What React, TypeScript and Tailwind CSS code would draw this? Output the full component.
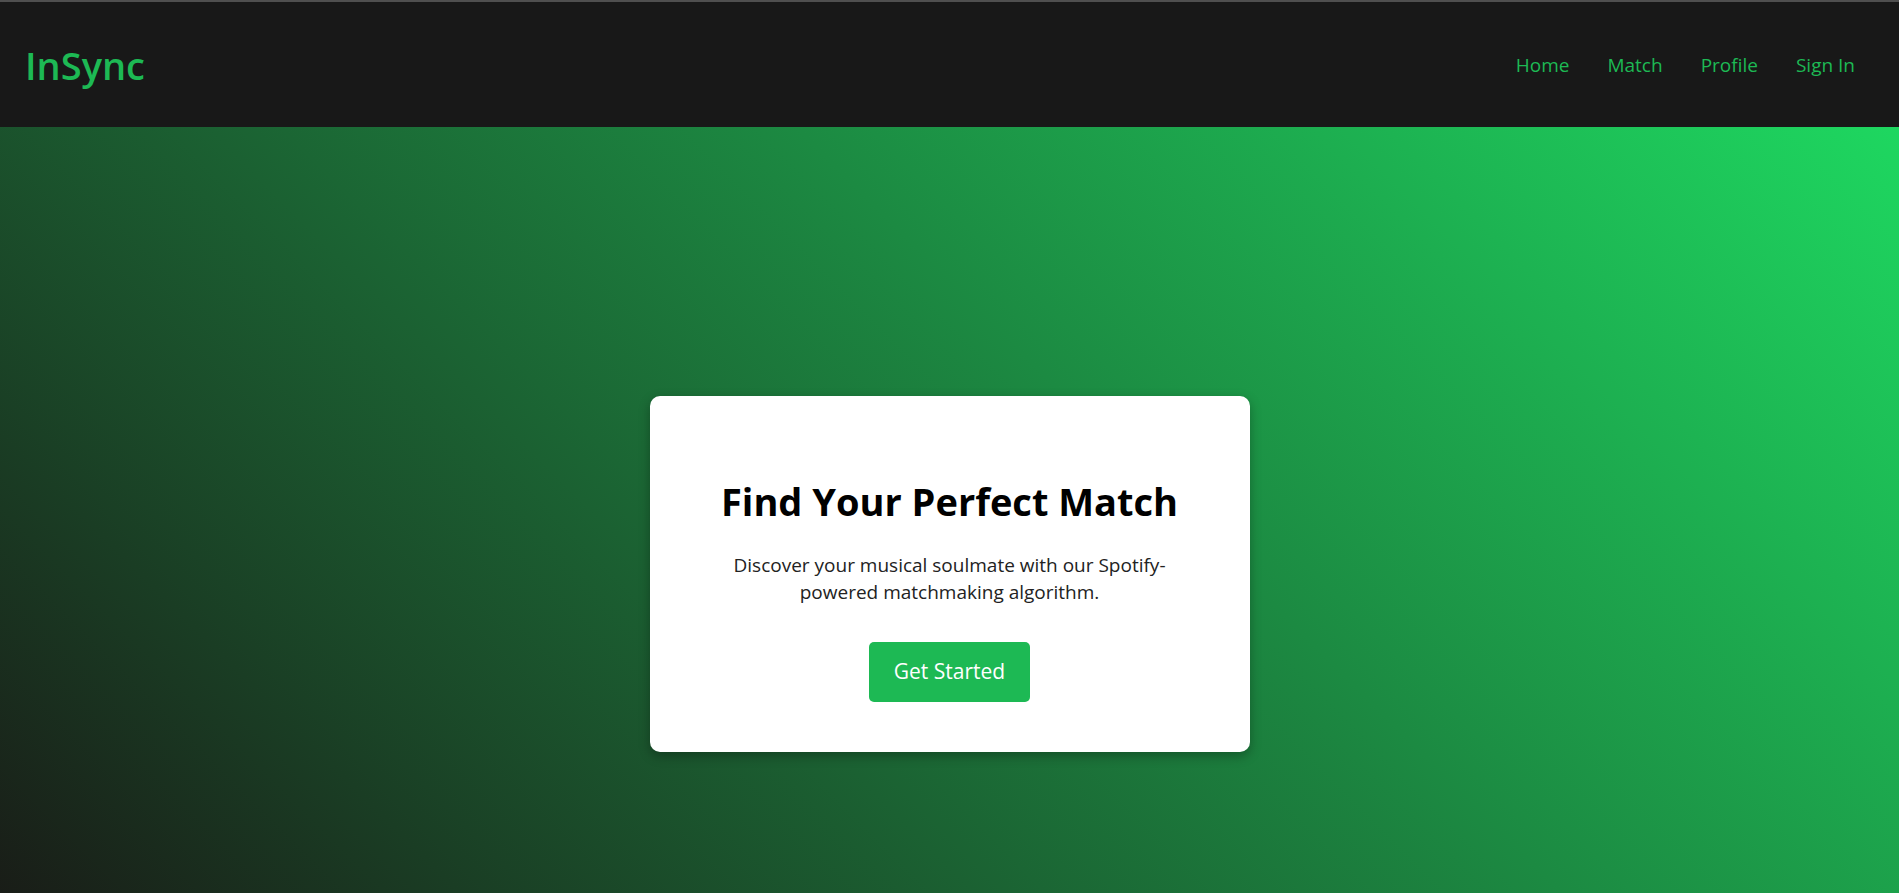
import React from "react";

export default function App() {
  return (
    <div className="font-['Open_Sans',sans-serif]">
      <div className="h-[2px] bg-[#4f4f4f]" />
      <header className="flex h-[125px] items-center justify-between bg-[#181818] pl-[25px] pr-[44px]">
        <div className="text-[38px] font-semibold leading-none text-[#1db954]">InSync</div>
        <nav className="mt-[2px] flex items-center gap-[38px] text-[19px] text-[#1db954]">
          <a href="#">Home</a>
          <a href="#">Match</a>
          <a href="#">Profile</a>
          <a href="#">Sign In</a>
        </nav>
      </header>
      <main className="flex min-h-screen items-center justify-center bg-[linear-gradient(45deg,#191414,#1ed760)]">
        <div className="flex w-[600px] flex-col items-center rounded-[10px] bg-white px-[50px] pb-[50px] pt-[80px] text-center shadow-[0_4px_12px_rgba(0,0,0,0.3)]">
          <h1 className="text-[38px] font-bold leading-[50px] text-black">Find Your Perfect Match</h1>
          <p className="mt-[26px] text-[19px] leading-[27px] text-[#222]">
            Discover your musical soulmate with our Spotify-
            <br />
            powered matchmaking algorithm.
          </p>
          <button className="mt-[36px] flex h-[60px] items-center rounded-[5px] bg-[#1db954] px-[25px] text-[21px] text-white">
            Get Started
          </button>
        </div>
      </main>
    </div>
  );
}
